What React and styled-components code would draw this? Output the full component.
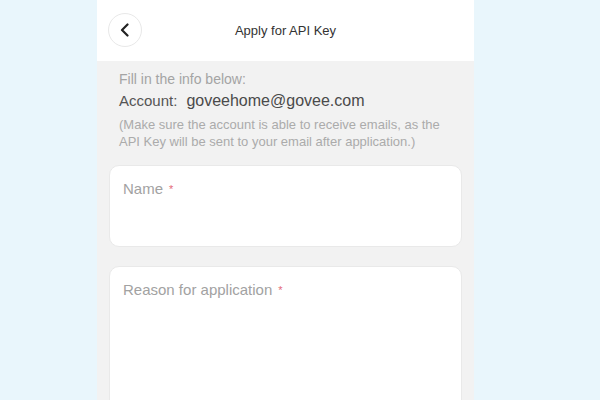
import React from "react";
import styled, { createGlobalStyle } from "styled-components";

const Global = createGlobalStyle`
  html, body { margin: 0; padding: 0; background: #e9f6fc; }
  body { font-family: "Liberation Sans", Arial, sans-serif; }
`;

const Page = styled.div`
  width: 600px;
  height: 400px;
  overflow: hidden;
  display: flex;
  justify-content: flex-start;
  background: #e9f6fc;
`;

const Phone = styled.div`
  margin-left: 97px;
  width: 377px;
  height: 400px;
  background: #f2f2f2;
  display: flex;
  flex-direction: column;
`;

const Header = styled.header`
  height: 61px;
  background: #ffffff;
  display: grid;
  grid-template-columns: 1fr auto 1fr;
  align-items: center;
  padding: 0 11px;
  box-sizing: border-box;
  flex-shrink: 0;
`;

const BackButton = styled.button`
  width: 34px;
  height: 34px;
  border-radius: 50%;
  border: 1px solid #e8e8e8;
  background: #fff;
  display: flex;
  align-items: center;
  justify-content: center;
  padding: 0;
  margin-top: -1px;
  justify-self: start;
`;

const Title = styled.h1`
  margin: 0;
  font-size: 13px;
  font-weight: 400;
  color: #333;
  margin-top: -1px;
`;

const Info = styled.section`
  padding: 8px 22px 0;
`;

const Hint = styled.div`
  font-size: 14px;
  line-height: 20px;
  color: #a4a4a4;
`;

const Account = styled.div`
  margin-top: 1px;
  line-height: 22px;
  color: #555;
  display: flex;
  align-items: baseline;
  gap: 9px;
`;

const AccountLabel = styled.span`
  font-size: 15px;
`;

const Email = styled.span`
  font-size: 16px;
  color: #4a4a4a;
`;

const Note = styled.p`
  margin: 4px 0 0;
  font-size: 13px;
  line-height: 17px;
  color: #ababab;
`;

const Fields = styled.div`
  padding: 15px 12px 0 12px;
  display: flex;
  flex-direction: column;
  gap: 19px;
`;

const Card = styled.div`
  background: #fff;
  border: 1px solid #e9e9e9;
  border-radius: 10px;
  height: ${(p) => p.$h}px;
  box-sizing: border-box;
  padding: 13px 13px 0;
`;

const Label = styled.div`
  font-size: 15px;
  line-height: 20px;
  color: #a2a2a2;
  display: flex;
  align-items: center;
`;

const Required = styled.span`
  color: #e46a78;
  font-size: 11px;
  margin-left: 6px;
  margin-top: -1px;
`;

function Chevron() {
  return (
    <svg width="10" height="14" viewBox="0 0 10 14" fill="none">
      <path
        d="M7.5 1.5 L2 7 L7.5 12.5"
        stroke="#222"
        strokeWidth="2.2"
        strokeLinecap="round"
        strokeLinejoin="round"
      />
    </svg>
  );
}

export default function App() {
  return (
    <Page>
      <Global />
      <Phone>
        <Header>
          <BackButton aria-label="Back">
            <Chevron />
          </BackButton>
          <Title>Apply for API Key</Title>
          <span />
        </Header>
        <Info>
          <Hint>Fill in the info below:</Hint>
          <Account>
            <AccountLabel>Account:</AccountLabel>
            <Email>goveehome@govee.com</Email>
          </Account>
          <Note>
            (Make sure the account is able to receive emails, as the
            <br />
            API Key will be sent to your email after application.)
          </Note>
        </Info>
        <Fields>
          <Card $h={82}>
            <Label>
              Name<Required>*</Required>
            </Label>
          </Card>
          <Card $h={180}>
            <Label>
              Reason for application<Required>*</Required>
            </Label>
          </Card>
        </Fields>
      </Phone>
    </Page>
  );
}
